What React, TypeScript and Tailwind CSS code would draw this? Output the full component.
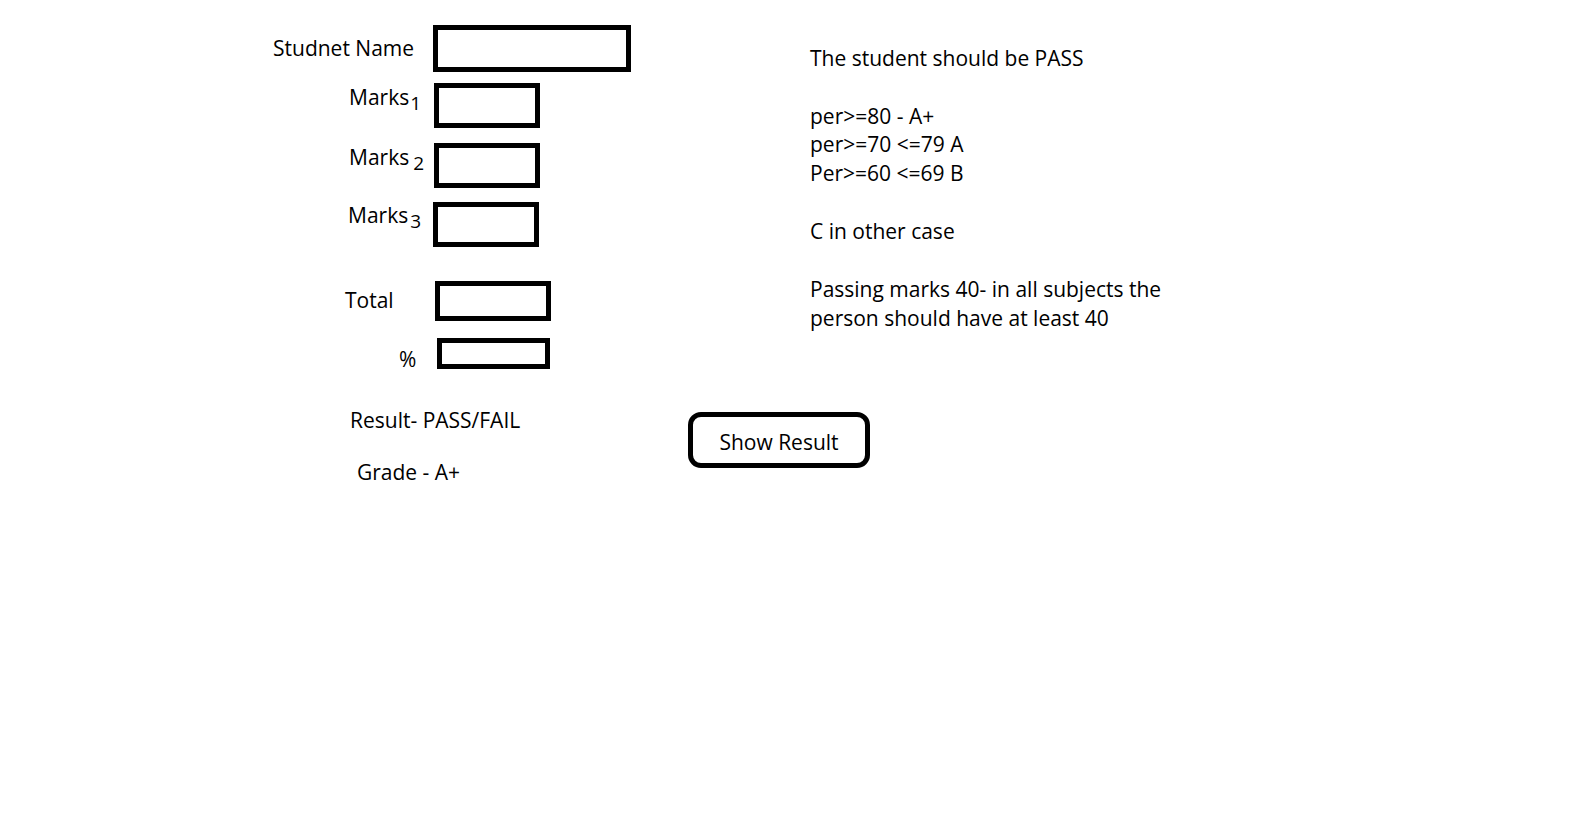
import React from 'react';

type RowProps = {
  label: React.ReactNode;
  labelW: string;
  labelClass: string;
  boxClass: string;
};

function FieldRow({ label, labelW, labelClass, boxClass }: RowProps) {
  return (
    <div className="flex items-start">
      <div className={labelW}>
        <div className={labelClass}>{label}</div>
      </div>
      <div className={boxClass} />
    </div>
  );
}

function Marks({ n, gap }: { n: string; gap: string }) {
  return (
    <span>
      Marks
      <span className={`${gap} inline-block text-[19px] align-[-5px]`}>{n}</span>
    </span>
  );
}

export default function App() {
  return (
    <div className="min-h-screen bg-white font-['Open_Sans','Liberation_Sans',sans-serif] text-[21px] leading-[24px] text-black">
      <div className="flex">
        <div className="w-[810px] shrink-0 pl-[273px] pt-[25px]">
          <FieldRow
            label="Studnet Name"
            labelW="w-[160px]"
            labelClass="mt-[11px]"
            boxClass="h-[47px] w-[198px] border-[5px] border-black"
          />
          <div className="mt-[11px]">
            <FieldRow
              label={<Marks n="1" gap="ml-[1px]" />}
              labelW="w-[161px]"
              labelClass="mt-[2px] ml-[76px]"
              boxClass="h-[45px] w-[106px] border-[5px] border-black"
            />
          </div>
          <div className="mt-[15px]">
            <FieldRow
              label={<Marks n="2" gap="ml-[4px]" />}
              labelW="w-[161px]"
              labelClass="mt-[2px] ml-[76px]"
              boxClass="h-[45px] w-[106px] border-[5px] border-black"
            />
          </div>
          <div className="mt-[14px]">
            <FieldRow
              label={<Marks n="3" gap="ml-[2px]" />}
              labelW="w-[160px]"
              labelClass="mt-[1px] ml-[75px]"
              boxClass="h-[45px] w-[106px] border-[5px] border-black"
            />
          </div>
          <div className="mt-[34px]">
            <FieldRow
              label="Total"
              labelW="w-[162px]"
              labelClass="mt-[7px] ml-[72px]"
              boxClass="h-[40px] w-[116px] border-[5px] border-black"
            />
          </div>
          <div className="mt-[17px]">
            <FieldRow
              label="%"
              labelW="w-[164px]"
              labelClass="mt-[9px] ml-[126px]"
              boxClass="h-[31px] w-[113px] border-[5px] border-black"
            />
          </div>
        </div>
        <div className="pt-[46px]">
          <div>The student should be PASS</div>
          <div className="mt-[34px]">per&gt;=80 - A+</div>
          <div className="mt-[4px]">per&gt;=70 &lt;=79 A</div>
          <div className="mt-[5px]">Per&gt;=60 &lt;=69 B</div>
          <div className="mt-[34px]">C in other case</div>
          <div className="mt-[34px]">Passing marks 40- in all subjects the</div>
          <div className="mt-[5px]">person should have at least 40</div>
        </div>
      </div>
      <div className="mt-[37px] flex items-start pl-[273px]">
        <div className="w-[415px] shrink-0">
          <div className="ml-[77px]">Result- PASS/FAIL</div>
          <div className="ml-[84px] mt-[28px]">Grade - A+</div>
        </div>
        <button className="mt-[4px] flex h-[56px] w-[182px] shrink-0 items-center justify-center rounded-[13px] border-[5px] border-black pt-[4px]">
          Show Result
        </button>
      </div>
    </div>
  );
}
